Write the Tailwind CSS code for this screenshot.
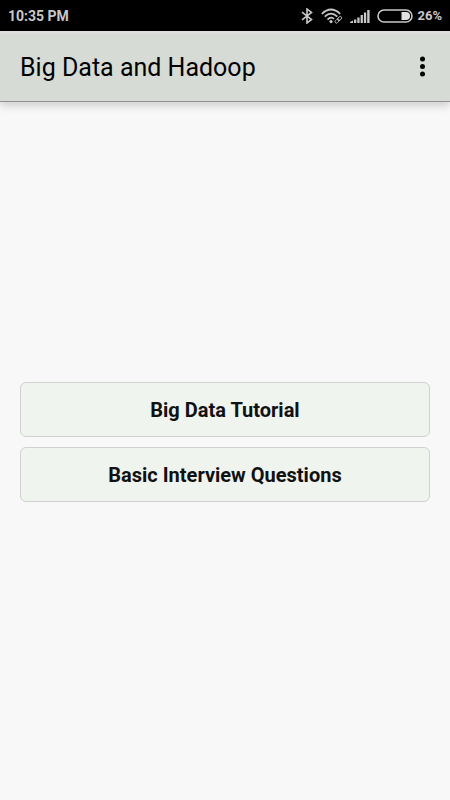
<!DOCTYPE html>
<html lang="en">
<head>
<meta charset="utf-8">
<meta name="viewport" content="width=device-width, initial-scale=1">
<title>Big Data and Hadoop</title>
<script src="https://cdn.jsdelivr.net/npm/@tailwindcss/browser@4"></script>
</head>
<body class="flex min-h-screen flex-col bg-[#f8f8f8] font-[Roboto,sans-serif] text-black">
  <div class="flex h-[31px] items-center justify-between bg-black px-2 text-[#c8c8c8]">
    <time class="text-sm font-bold">10:35 PM</time>
    <div class="flex items-center">
      <!-- Bluetooth -->
      <svg class="mr-2 h-4 w-3" viewBox="0 0 12 16" fill="none" stroke="currentColor" stroke-width="1.600" aria-hidden="true"><path d="M1 4.200L10.500 11.600L6 15V1L10.500 4.400L1 11.800"/></svg>
      <!-- Wi-Fi with link badge -->
      <svg class="mr-[7px] h-4 w-[22px]" viewBox="0 0 22 16" fill="none" stroke="currentColor" aria-hidden="true">
        <path stroke-width="1.700" d="M.8 5.800Q10-2.800 19.200 5.800M3.700 8.700Q10 2.600 16.300 8.700M6.500 11.600Q10 8 13 10.900"/>
        <circle cx="10" cy="13.600" r="1.600" fill="currentColor" stroke="none"/>
        <g stroke-width=".9" transform="rotate(-45 17.300 11.700)"><rect x="13.200" y="10.400" width="4.800" height="2.800" rx="1.400"/><rect x="16.600" y="10.400" width="4.800" height="2.800" rx="1.400"/></g>
      </svg>
      <!-- Signal strength -->
      <svg class="mr-[7px] h-4 w-5" viewBox="0 0 20 16" fill="currentColor" aria-hidden="true"><path d="M0 15V14L3 12.500V15ZM4 11.500H6.300V15H4ZM7.300 9.500H9.600V15H7.300ZM10.600 7H12.900V15H10.600ZM13.900 4.500H16.200V15H13.900ZM17.200 2H19.600V15H17.200Z"/></svg>
      <!-- Battery -->
      <svg class="mr-1 h-4 w-9" viewBox="0 0 36 16" aria-hidden="true"><rect x="1" y="2" width="34" height="12" rx="6" fill="none" stroke="currentColor" stroke-width="1.600"/><path fill="#e0e0e0" d="M24.500 4H29A4 4 0 0 1 29 12H24.500Z"/></svg>
      <span class="text-[13px] font-bold">26%</span>
    </div>
  </div>

  <header class="relative flex h-[71px] items-center justify-between border-t-[3px] border-b border-t-[#dedede] border-b-[#8f928f] bg-[#d7dbd6] pr-[10px] pl-5 shadow-[0_4px_8px_rgba(0,0,0,0.16)]">
    <h1 class="text-[25px] leading-8">Big Data and Hadoop</h1>
    <button type="button" aria-label="More options" class="flex h-10 w-9 items-center justify-center">
      <svg class="h-6 w-6" viewBox="0 0 24 24" fill="currentColor" aria-hidden="true"><circle cx="12.500" cy="3" r="2.500"/><circle cx="12.500" cy="10.500" r="2.500"/><circle cx="12.500" cy="18" r="2.500"/></svg>
    </button>
  </header>

  <main class="flex flex-1 flex-col justify-center gap-[10px] px-5 pb-[18px]">
    <button type="button" class="h-[55px] rounded-md border border-[#d0d2d0] bg-[#eff4ef] text-xl font-bold text-[#111]">Big Data Tutorial</button>
    <button type="button" class="h-[55px] rounded-md border border-[#d0d2d0] bg-[#eff4ef] text-xl font-bold text-[#111]">Basic Interview Questions</button>
  </main>
</body>
</html>
